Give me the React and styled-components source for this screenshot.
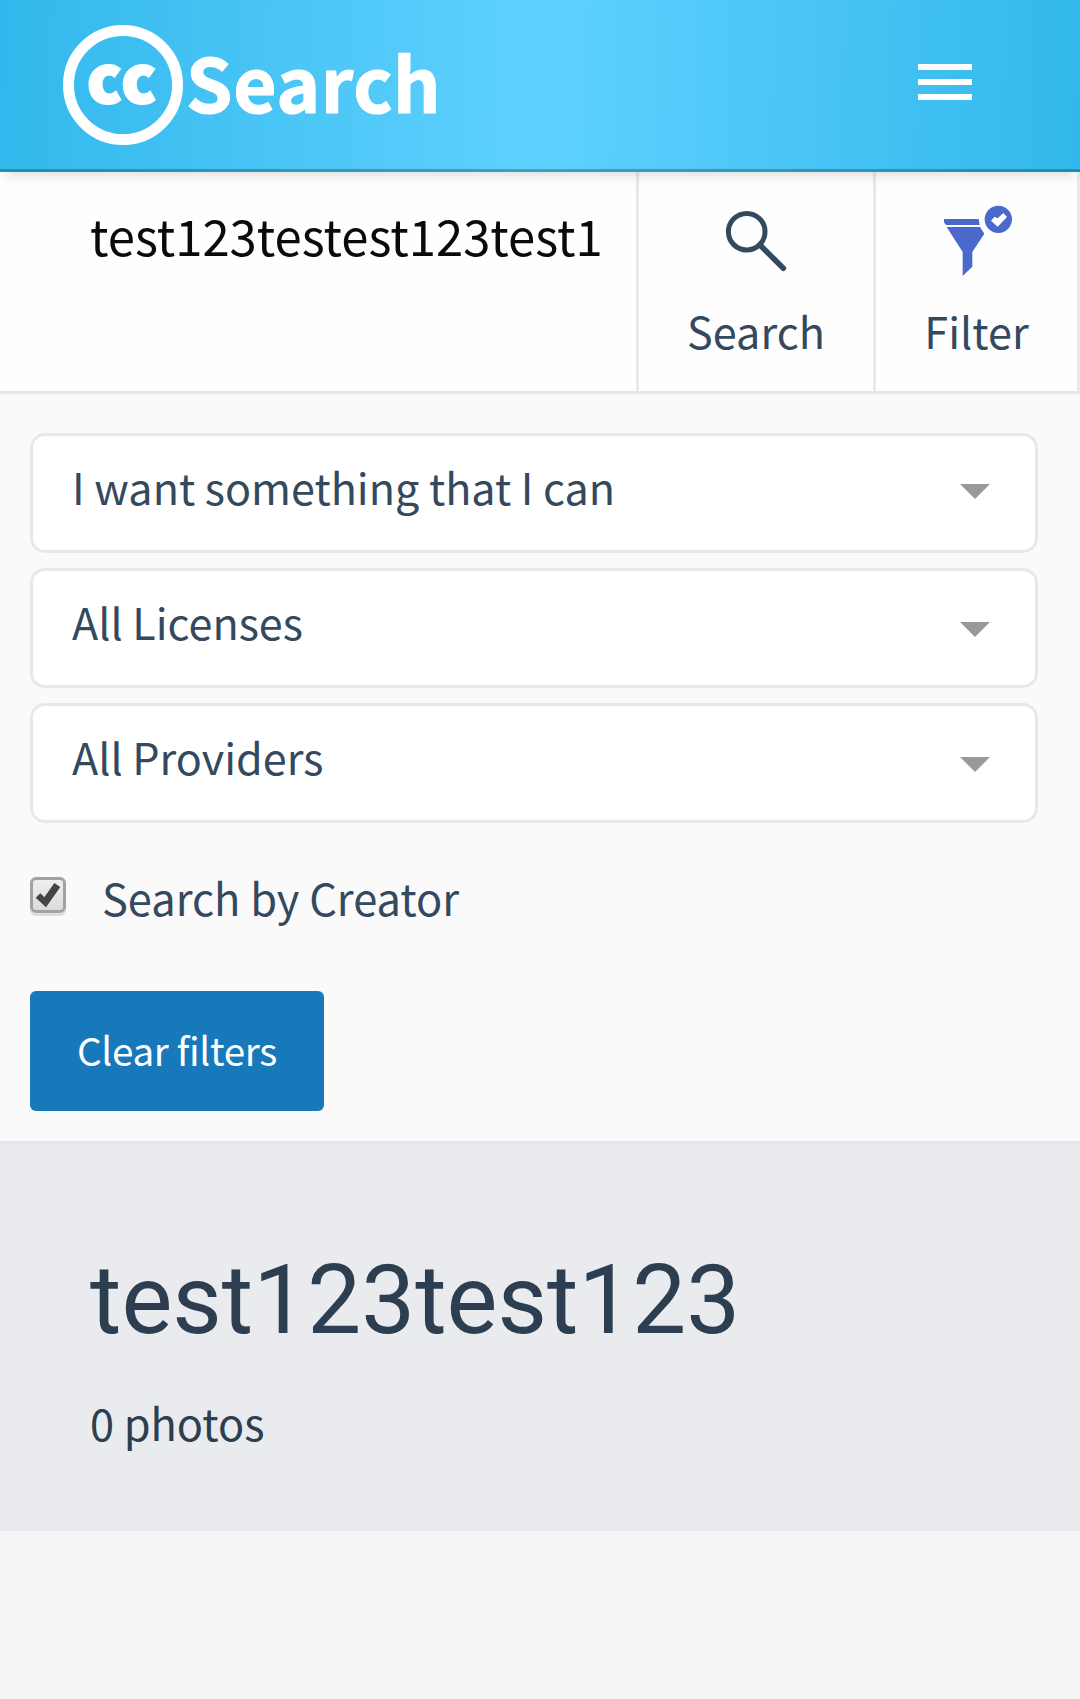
import React from "react";
import styled, { createGlobalStyle } from "styled-components";

const Global = createGlobalStyle`
  *, *::before, *::after { box-sizing: border-box; }
  html { min-height: 100%; background: #f5f5f5; }
  body { margin: 0; font-family: "Noto Sans CJK SC", "Noto Sans", sans-serif; color: #34495e; font-size: 43.1px; }
  button, input { font-family: inherit; color: inherit; border: 0; margin: 0; padding: 0; background: none; }
  svg { display: block; }
`;

const Page = styled.div`
  width: 1080px;
  min-height: 1699px;
  background: #f5f5f5;
  overflow: hidden;
`;

const Header = styled.header`
  position: relative;
  z-index: 1;
  display: flex;
  align-items: flex-start;
  justify-content: space-between;
  height: 172px;
  padding: 25px 108px 0 63px;
  border-bottom: 3px solid rgba(0, 0, 0, 0.25);
  background: linear-gradient(92deg, #32b8ec 0%, #5fd1ff 50%, #32b8ec 100%) border-box;
  box-shadow: 0 9px 12px -6px rgba(0, 0, 0, 0.14);
`;

const Brand = styled.div`
  display: flex;
  color: #fff;
`;

const Ring = styled.div`
  width: 120px;
  height: 120px;
  border: 11px solid #fff;
  border-radius: 50%;
  padding: 6px 0 0 13px;
  font-size: 65px;
  font-weight: 900;
  line-height: 66px;
  letter-spacing: 1.5px;
  -webkit-text-stroke: 2.2px #fff;
`;

const BrandName = styled.span`
  margin: 14px 0 0 3px;
  font-size: 74.5px;
  font-weight: 700;
  line-height: 84px;
  letter-spacing: 0.7px;
  -webkit-text-stroke: 1.2px #fff;
`;

const MenuButton = styled.button`
  display: grid;
  gap: 9px;
  width: 54px;
  margin-top: 39px;
`;

const MenuBar = styled.span`
  height: 6px;
  background: #fff;
`;

const SearchBar = styled.form`
  display: grid;
  grid-template-columns: 636px 237px 207px;
  height: 222px;
  background: #fefefe;
  border-bottom: 3px solid #e6e6e6;
`;

const SearchInput = styled.input`
  width: 100%;
  height: 124px;
  padding: 0 30px 0 90px;
  font-size: 49px;
  color: #0a0a0a;
  outline: 0;
`;

const Action = styled.button`
  display: flex;
  flex-direction: column;
  align-items: center;
  padding-top: 33px;
  border-left: 3px solid #e6eaea;
  border-right: ${(p) => (p.$last ? "3px solid #e6eaea" : "0")};
  font-size: 43.2px;
`;

const ActionLabel = styled.span`
  margin-top: 24px;
  line-height: 60px;
`;

const Filters = styled.section`
  height: 750px;
  padding: 39px 42px 0 30px;
  background: #fafafa;
  border-bottom: 3px solid #e6e9e9;
`;

const SelectList = styled.div`
  display: grid;
  gap: 15px;
`;

const Select = styled.div`
  display: flex;
  justify-content: space-between;
  align-items: flex-start;
  height: 120px;
  padding: 20px 45px 0 39px;
  border: 3px solid #e8e8e8;
  border-radius: 15px;
  background: #fff;
  line-height: 60px;
`;

const Caret = styled.i`
  margin-top: ${(p) => p.$drop}px;
  border: 15px solid transparent;
  border-top-color: #999;
  border-bottom: 0;
`;

const CheckRow = styled.label`
  display: flex;
  gap: 36px;
  margin-top: 44px;
  line-height: 60px;
  font-size: 43.4px;
`;

const CheckBox = styled.span`
  width: 36px;
  height: 36px;
  margin-top: 10px;
  border: 3px solid #a2a2a2;
  border-radius: 6px;
  background: linear-gradient(#eee, #dcdcdc);
  box-shadow: 0 3px 0 #dedede;
`;

const ClearButton = styled.button`
  display: block;
  width: 294px;
  height: 120px;
  margin-top: 64px;
  padding-bottom: 4px;
  border-radius: 6px;
  background: #1779ba;
  color: #fefefe;
  font-size: 38.7px;
  letter-spacing: -0.35px;
`;

const Results = styled.section`
  height: 387px;
  padding: 91px 90px 0;
  background: #e9ebee;
  color: #2c3e50;
`;

const Title = styled.h1`
  margin: 0;
  font: 400 96px/130px Roboto, sans-serif;
`;

const Count = styled.p`
  margin: 27px 0 0;
  line-height: 60px;
  font-size: 43.3px;
`;

const SearchIcon = () => (
  <svg width="68" height="71" viewBox="0 0 68 71" fill="none" stroke="#34495e">
    <circle cx="24.7" cy="26.7" r="18.3" strokeWidth="5" />
    <path d="M38.5 40.5 61.3 63.3" strokeWidth="5.6" strokeLinecap="round" />
  </svg>
);

const FilterIcon = () => (
  <svg width="70" height="71" viewBox="0 0 210 213" fill="#4b69cc">
    <path d="M6 42H110L113 60H12L6 52ZM14 66H114L127 86 91 141V185L62 213V141Z" />
    <circle cx="169" cy="43" r="41" />
    <path d="M147 47 158 35 167 40 184 24 195 36 167 65Z" fill="#fff" />
  </svg>
);

const Tick = () => (
  <svg width="30" height="30" viewBox="0 0 90 90">
    <path d="M8 53 22 40 34 52 64 9 82 21 39 82Z" fill="#444" />
  </svg>
);

const selects = [
  { label: "I want something that I can", drop: 28 },
  { label: "All Licenses", drop: 31 },
  { label: "All Providers", drop: 31 },
];

export default function App() {
  return (
    <Page>
      <Global />
      <Header>
        <Brand>
          <Ring>cc</Ring>
          <BrandName>Search</BrandName>
        </Brand>
        <MenuButton type="button" aria-label="Menu">
          <MenuBar />
          <MenuBar />
          <MenuBar />
        </MenuButton>
      </Header>
      <SearchBar>
        <SearchInput defaultValue="test123testest123test1" />
        <Action type="button">
          <SearchIcon />
          <ActionLabel>Search</ActionLabel>
        </Action>
        <Action type="button" $last>
          <FilterIcon />
          <ActionLabel>Filter</ActionLabel>
        </Action>
      </SearchBar>
      <Filters>
        <SelectList>
          {selects.map((s) => (
            <Select key={s.label}>
              <span>{s.label}</span>
              <Caret $drop={s.drop} />
            </Select>
          ))}
        </SelectList>
        <CheckRow>
          <CheckBox>
            <Tick />
          </CheckBox>
          Search by Creator
        </CheckRow>
        <ClearButton type="button">Clear filters</ClearButton>
      </Filters>
      <Results>
        <Title>test123test123</Title>
        <Count>0 photos</Count>
      </Results>
    </Page>
  );
}
